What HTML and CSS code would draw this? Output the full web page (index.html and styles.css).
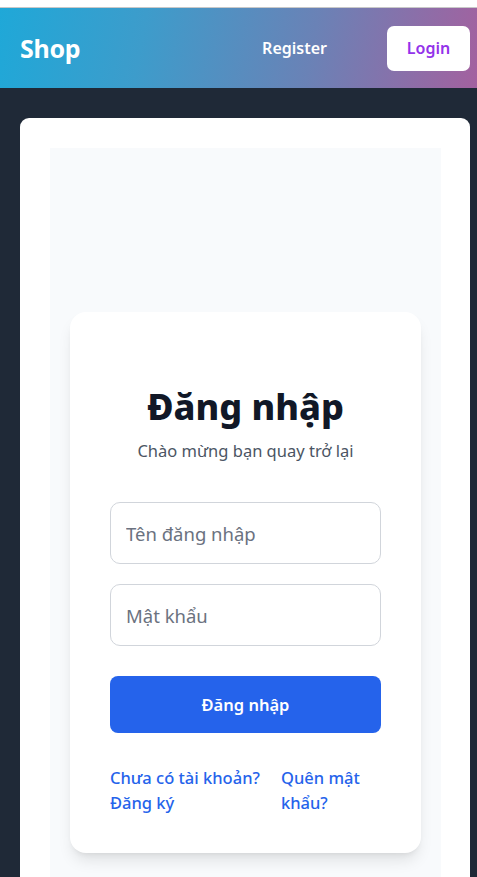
FILE: index.html
```html
<!DOCTYPE html>
<html lang="vi">
<head>
<meta charset="utf-8">
<title>Shop - Đăng nhập</title>
<link rel="stylesheet" href="styles.css">
</head>
<body>
<header class="topbar">
  <div class="brand">Shop</div>
  <nav class="nav">
    <a class="nav-link" href="#">Register</a>
    <a class="nav-btn" href="#">Login</a>
  </nav>
</header>
<main class="main">
  <section class="sheet">
    <div class="panel">
      <div class="card">
        <h1 class="title">Đăng nhập</h1>
        <p class="subtitle">Chào mừng bạn quay trở lại</p>
        <form class="form">
          <div class="fields">
            <input class="field" type="text" placeholder="Tên đăng nhập">
            <input class="field" type="password" placeholder="Mật khẩu">
          </div>
          <button class="submit" type="button">Đăng nhập</button>
        </form>
        <div class="links">
          <a class="link" href="#">Chưa có tài khoản? Đăng ký</a>
          <a class="link link-right" href="#">Quên mật khẩu?</a>
        </div>
      </div>
    </div>
  </section>
</main>
</body>
</html>
```

FILE: styles.css
```css
* { box-sizing: border-box; }
html, body { margin: 0; padding: 0; }
body {
  font-family: "Noto Sans", "Open Sans", sans-serif;
  background: #1f2937;
  border-top: 7px solid #ffffff;
  min-height: 877px;
}
.topbar {
  height: 81px;
  border-top: 1px solid #c8c8c8;
  background: linear-gradient(100deg, #1fa8d8 0%, #3d9ccb 30%, #6a82b6 65%, #a3619f 100%);
  display: flex;
  align-items: center;
  justify-content: space-between;
  padding: 0 7px 0 20px;
}
.brand {
  color: #fff;
  font-weight: 700;
  font-size: 25px;
  letter-spacing: -0.3px;
}
.nav { display: flex; align-items: center; gap: 60px; }
.nav-link {
  color: #fff;
  text-decoration: none;
  font-weight: 600;
  font-size: 16px;
}
.nav-btn {
  display: flex;
  align-items: center;
  justify-content: center;
  width: 83px;
  height: 45px;
  background: #fff;
  color: #9333ea;
  text-decoration: none;
  font-weight: 600;
  font-size: 16px;
  border-radius: 7px;
}
.main { padding: 30px 7px 0 20px; }
.sheet {
  background: #fff;
  border-radius: 9px 9px 0 0;
  padding: 30px 29px 0 30px;
}
.panel {
  background: #f8fafc;
  padding: 164px 20px 164px 20px;
}
.card {
  background: #fff;
  border-radius: 16px;
  box-shadow: 0 10px 15px -3px rgba(0,0,0,0.1), 0 4px 6px -4px rgba(0,0,0,0.1);
  padding: 75px 40px 40px;
  height: 541px;
}
.title {
  margin: 0;
  text-align: center;
  font-size: 36px;
  line-height: 40px;
  font-weight: 800;
  color: #111827;
}
.subtitle {
  margin: 12px 0 0;
  text-align: center;
  color: #4b5563;
  font-size: 16.5px;
  line-height: 24px;
}
.form { margin-top: 39px; }
.fields { display: flex; flex-direction: column; gap: 20px; }
.field {
  width: 100%;
  height: 62px;
  border: 1px solid #d1d5db;
  border-radius: 10px;
  padding: 0 15px;
  font-family: inherit;
  font-size: 18.5px;
  color: #111827;
  background: #fff;
}
.field::placeholder { color: #6b7280; }
.submit {
  margin-top: 30px;
  width: 100%;
  height: 57px;
  border: 0;
  border-radius: 8px;
  background: #2563eb;
  color: #fff;
  font-family: inherit;
  font-size: 16.5px;
  font-weight: 600;
}
.links {
  margin-top: 32px;
  display: flex;
  justify-content: space-between;
  gap: 18px;
}
.link {
  color: #2563eb;
  text-decoration: none;
  font-size: 16.5px;
  font-weight: 500;
  line-height: 25px;
}
.link-right { flex: 0 0 100px; }
```
